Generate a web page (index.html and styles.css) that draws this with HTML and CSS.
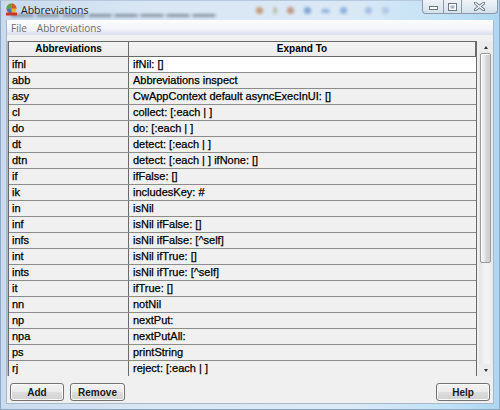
FILE: index.html
```html
<!DOCTYPE html>
<html>
<head>
<meta charset="utf-8">
<link rel="stylesheet" href="styles.css">
</head>
<body>
<div class="window">
  <div class="titlebar">
    <div class="blur blur-text"></div>
    <div class="blur blur-icons">
      <span class="bi b1"></span><span class="bi b2"></span><span class="bi b3"></span><span class="bi b4"></span><span class="bi b5"></span><span class="bi b6"></span><span class="bi b7"></span><span class="bi b8"></span>
    </div>
    <svg class="app-icon" width="13" height="13" viewBox="0 0 13 13">
      <circle cx="6.5" cy="5.5" r="5" fill="#e9b230"/>
      <path d="M6.5 0.5 A5 5 0 0 1 11.5 5.5 L6.5 5.5 Z" fill="#d9532a"/>
      <path d="M1.5 5.5 A5 5 0 0 1 6.5 0.5 L6.5 5.5 Z" fill="#5aa44a"/>
      <path d="M1.5 5.5 A5 5 0 0 0 6.5 10.5 L6.5 5.5 Z" fill="#3b7ac2"/>
      <rect x="1" y="9.5" width="11" height="3" rx="0.5" fill="#c8372b"/>
    </svg>
    <span class="title">Abbreviations</span>
    <div class="controls">
      <div class="ctl ctl-min"><svg width="9" height="4" viewBox="0 0 9 4"><rect x="0.5" y="0.5" width="8" height="3" fill="#fff" stroke="#6b7684"/></svg></div>
      <div class="ctl ctl-max"><svg width="9" height="8" viewBox="0 0 9 8"><rect x="0.5" y="0.5" width="8" height="7" fill="#fff" stroke="#6b7684"/><rect x="2.5" y="2.5" width="4" height="3" fill="#aab4c0"/></svg></div>
      <div class="ctl ctl-close"><svg width="11" height="9" viewBox="0 0 11 9"><path d="M1 1 L10 8 M10 1 L1 8" stroke="#6b7684" stroke-width="3" stroke-linecap="square"/><path d="M1 1 L10 8 M10 1 L1 8" stroke="#fff" stroke-width="1.2"/></svg></div>
    </div>
  </div>
  <div class="client">
    <div class="menubar">
      <span class="menu">File</span>
      <span class="menu">Abbreviations</span>
    </div>
    <div class="main">
      <div class="grid">
        <div class="row head">
          <div class="c1">Abbreviations</div>
          <div class="c2">Expand To</div>
        </div>
        <div class="row"><div class="c1">ifnl</div><div class="c2 editing">ifNil: []</div></div>
        <div class="row"><div class="c1">abb</div><div class="c2">Abbreviations inspect</div></div>
        <div class="row"><div class="c1">asy</div><div class="c2">CwAppContext default asyncExecInUI: []</div></div>
        <div class="row"><div class="c1">cl</div><div class="c2">collect: [:each | ]</div></div>
        <div class="row"><div class="c1">do</div><div class="c2">do: [:each | ]</div></div>
        <div class="row"><div class="c1">dt</div><div class="c2">detect: [:each | ]</div></div>
        <div class="row"><div class="c1">dtn</div><div class="c2">detect: [:each | ] ifNone: []</div></div>
        <div class="row"><div class="c1">if</div><div class="c2">ifFalse: []</div></div>
        <div class="row"><div class="c1">ik</div><div class="c2">includesKey: #</div></div>
        <div class="row"><div class="c1">in</div><div class="c2">isNil</div></div>
        <div class="row"><div class="c1">inf</div><div class="c2">isNil ifFalse: []</div></div>
        <div class="row"><div class="c1">infs</div><div class="c2">isNil ifFalse: [^self]</div></div>
        <div class="row"><div class="c1">int</div><div class="c2">isNil ifTrue: []</div></div>
        <div class="row"><div class="c1">ints</div><div class="c2">isNil ifTrue: [^self]</div></div>
        <div class="row"><div class="c1">it</div><div class="c2">ifTrue: []</div></div>
        <div class="row"><div class="c1">nn</div><div class="c2">notNil</div></div>
        <div class="row"><div class="c1">np</div><div class="c2">nextPut:</div></div>
        <div class="row"><div class="c1">npa</div><div class="c2">nextPutAll:</div></div>
        <div class="row"><div class="c1">ps</div><div class="c2">printString</div></div>
        <div class="row"><div class="c1">rj</div><div class="c2">reject: [:each | ]</div></div>
      </div>
      <div class="scrollbar">
        <div class="sb-btn"><span class="arrow up"></span></div>
        <div class="sb-track">
          <div class="thumb"></div>
        </div>
        <div class="sb-btn"><span class="arrow down"></span></div>
      </div>
    </div>
    <div class="buttons">
      <button class="btn btn-add">Add</button>
      <button class="btn btn-remove">Remove</button>
      <span class="spacer"></span>
      <button class="btn btn-help">Help</button>
    </div>
  </div>
</div>
</body>
</html>
```
FILE: styles.css
```css
* { box-sizing: border-box; }
html, body { margin: 0; padding: 0; }
body {
  width: 500px;
  height: 410px;
  overflow: hidden;
  font-family: "Liberation Sans", Arial, sans-serif;
  background: #fff;
}
.window {
  width: 500px;
  height: 410px;
  display: flex;
  flex-direction: column;
  background: linear-gradient(to right, #c8dbee 0%, #d9e7f4 30%, #dbe9f6 70%, #c2e2f6 88%, #aed7f2 100%);
  border: 1px solid #8ea6c0;
  border-top-color: #b6c9dc;
}
.titlebar {
  height: 19px;
  position: relative;
  display: flex;
  align-items: center;
  padding-left: 4px;
  flex: none;
}
.blur { position: absolute; filter: blur(1.5px); }
.blur-text {
  left: 10px; top: 13px; width: 205px; height: 3px;
  background: repeating-linear-gradient(to right, rgba(70,80,100,.55) 0 22px, rgba(70,80,100,.15) 22px 26px);
}
.blur-icons { left: 255px; top: 6px; display: flex; gap: 10px; }
.bi { width: 7px; height: 7px; border-radius: 50%; display: block; }
.b1 { background: #c79a78; }
.b2 { background: #b7c2a2; width: 4px; }
.b3 { background: #c49780; }
.b4 { background: #7ea6d4; }
.b5 { background: #8fb1de; width: 9px; height: 4px; margin-top: 2px; }
.b6 { background: #8fb1de; }
.b7 { background: #a6bde0; margin-left: 8px; }
.b8 { background: #b3c6e4; }
.app-icon { position: relative; flex: none; margin-top: -2px; }
.title {
  position: relative;
  margin-left: 3px;
  margin-top: -2px;
  font-family: "Open Sans", "Noto Sans", sans-serif;
  font-size: 10.5px;
  color: #1e1e1e;
}
.controls {
  position: relative;
  margin-left: auto;
  margin-right: 1px;
  align-self: flex-start;
  margin-top: -1px;
  display: flex;
  height: 14px;
  border: 1px solid #8b9aab;
  border-top: none;
  border-radius: 0 0 4px 4px;
  overflow: hidden;
  background: linear-gradient(#eef3f8, #d6e1ec);
}
.ctl { display: flex; align-items: center; justify-content: center; }
.ctl-min { width: 21px; border-right: 1px solid #8b9aab; padding-top: 3px; }
.ctl-max { width: 18px; border-right: 1px solid #8b9aab; }
.ctl-close { width: 35px; }
.client {
  flex: 1;
  margin: 0 5px 5px 5px;
  border: 1px solid #a7b8cb;
  border-top: none;
  background: #f0f0f0;
  display: flex;
  flex-direction: column;
}
.menubar {
  height: 15px;
  flex: none;
  display: flex;
  align-items: center;
  padding-left: 4px;
  gap: 10px;
  background: linear-gradient(#fbfcfd 0%, #f3f5f9 60%, #e3e6f1 85%, #dcdfec 100%);
  font-family: "Open Sans", "Noto Sans", sans-serif;
  font-size: 10px;
  color: #6d6d6d;
}
.main {
  margin-top: 6px;
  display: flex;
  padding-left: 1px;
  gap: 1px;
  height: 335px;
  flex: none;
}
.grid {
  width: 471px;
  height: 335px;
  overflow: hidden;
  border: 1px solid #6a6a6a;
  border-bottom: none;
  box-shadow: -1px 0 0 #b9b9b9;
}
.row {
  display: flex;
  height: 16px;
  border-bottom: 1px solid #8c8c8c;
  font-size: 11px;
  line-height: 15px;
  color: #000;
  -webkit-text-stroke: 0.25px #000;
}
.row .c1 {
  width: 120px;
  flex: none;
  border-right: 1px solid #6a6a6a;
  padding-left: 3px;
  white-space: nowrap;
}
.row .c2 {
  flex: 1;
  padding-left: 4px;
  white-space: nowrap;
}
.row .editing { background: #fff; }
.row.head {
  height: 15px;
  border-bottom: 1px solid #6a6a6a;
  font-weight: bold;
  font-size: 10px;
  line-height: 14px;
  -webkit-text-stroke: 0;
  background: linear-gradient(#f4f4f4, #ececec);
}
.row.head .c1, .row.head .c2 { text-align: center; padding-left: 0; }
.row.head .c2 { border-right: 1px solid #6a6a6a; }
.scrollbar {
  width: 14px;
  height: 335px;
  margin-left: 1px;
  display: flex;
  flex-direction: column;
  background: #ececec;
}
.sb-btn {
  height: 12px;
  flex: none;
  display: flex;
  align-items: center;
  justify-content: center;
}
.arrow { width: 0; height: 0; border-left: 2.5px solid transparent; border-right: 2.5px solid transparent; }
.arrow.up { border-bottom: 3px solid #333; }
.arrow.down { border-top: 3px solid #333; }
.sb-track {
  flex: 1;
  padding: 0 2px 0 1px;
  background: linear-gradient(to right, #e4e4e4, #f2f2f2 40%, #f2f2f2 70%, #e8e8e8);
}
.thumb {
  height: 210px;
  border: 1px solid #9a9a9a;
  border-radius: 2px;
  background: linear-gradient(to right, #f6f6f6, #e6e6e6 45%, #d6d6d6 55%, #cfcfcf);
  box-shadow: inset 1px 1px 0 #fcfcfc;
}
.buttons {
  margin-top: 7px;
  display: flex;
  gap: 6px;
  padding: 0 3px 0 3px;
  height: 18px;
  flex: none;
}
.spacer { flex: 1; }
.btn {
  height: 18px;
  padding: 0;
  border: 1px solid #727272;
  border-radius: 3px;
  font-family: "Liberation Sans", Arial, sans-serif;
  font-weight: bold;
  font-size: 10px;
  color: #1a1a1a;
  background: linear-gradient(#f3f3f3 0%, #ebebeb 48%, #dddddd 52%, #d1d1d1 100%);
  box-shadow: inset 0 0 0 1px #fbfbfb;
}
.btn-add { width: 54px; }
.btn-remove { width: 55px; }
.btn-help { width: 54px; }
```
